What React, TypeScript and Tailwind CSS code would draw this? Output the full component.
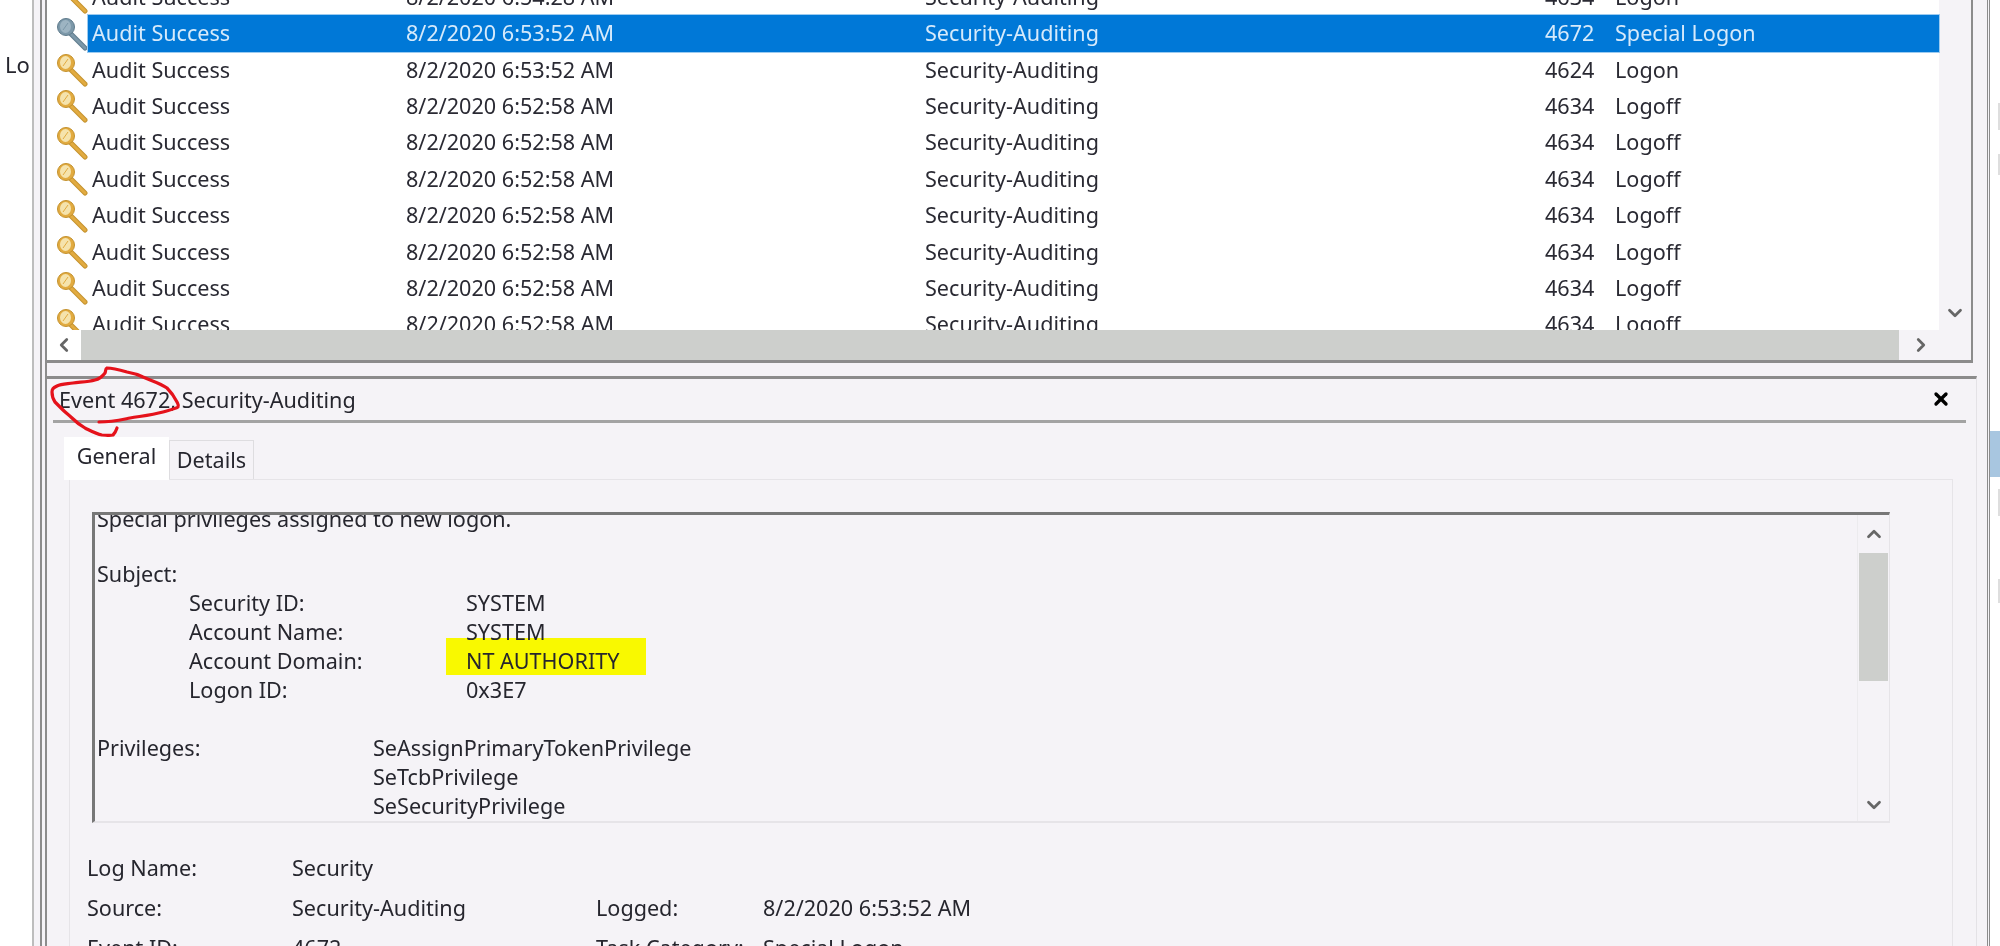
import React from 'react'
import { ChevronDown, ChevronLeft, ChevronRight, ChevronUp, X } from 'lucide-react'

const rows = [
  { time: '6:54:28 AM', id: '4634', task: 'Logon' },
  { time: '6:53:52 AM', id: '4672', task: 'Special Logon', selected: true },
  { time: '6:53:52 AM', id: '4624', task: 'Logon' },
  { time: '6:52:58 AM', id: '4634', task: 'Logoff' },
  { time: '6:52:58 AM', id: '4634', task: 'Logoff' },
  { time: '6:52:58 AM', id: '4634', task: 'Logoff' },
  { time: '6:52:58 AM', id: '4634', task: 'Logoff' },
  { time: '6:52:58 AM', id: '4634', task: 'Logoff' },
  { time: '6:52:58 AM', id: '4634', task: 'Logoff' },
  { time: '6:52:58 AM', id: '4634', task: 'Logoff' },
]

const KeyIcon = ({ selected }: { selected?: boolean }) => {
  const main = selected ? '#7c98a9' : '#e2ab40'
  const dark = selected ? '#5f7b8c' : '#c4922e'
  const inner = selected ? '#9db4c2' : '#f5e3ac'
  return (
    <svg width="31" height="35" viewBox="0 0 31 35" fill="none" className="shrink-0">
      <path d="M13 17 L28 32" stroke={dark} strokeWidth="5" strokeLinecap="round" />
      <path d="M13 17 L28 32" stroke={main} strokeWidth="3" strokeLinecap="round" />
      <circle cx="9" cy="11" r="8.5" fill={main} stroke={dark} strokeWidth="1" />
      <ellipse cx="8.5" cy="10.5" rx="5.5" ry="6.5" fill={inner} />
      <path d="M6 14 L11 7" stroke={main} strokeWidth="1" />
    </svg>
  )
}

const EventRow = ({ row }: { row: any }) => (
  <div className="flex h-[36.4px] shrink-0 items-center pl-[10px]">
    <KeyIcon selected={row.selected} />
    <div
      className={
        row.selected
          ? 'flex h-[37px] flex-1 items-center bg-[#0078d7] pl-[4px] text-[#d6eafb] shadow-[0_0_0_1px_#9ccbf0]'
          : 'flex h-[37px] flex-1 items-center pl-[4px] text-[#2a2a33]'
      }
    >
      <span className="w-[314px] shrink-0">Audit Success</span>
      <span className="w-[519px] shrink-0">8/2/2020 {row.time}</span>
      <span className="w-[620px] shrink-0">Security-Auditing</span>
      <span className="w-[70px] shrink-0">{row.id}</span>
      <span>{row.task}</span>
    </div>
  </div>
)

const Line = ({ label, value, wide }: { label?: string; value?: string; wide?: boolean }) => (
  <div className="flex h-[28.9px] items-center whitespace-nowrap">
    {wide ? (
      <>
        <span className={value ? 'w-[276px] shrink-0' : ''}>{label}</span>
        {value && <span>{value}</span>}
      </>
    ) : (
      <>
        <span className="ml-[92px] w-[277px] shrink-0">{label}</span>
        <span>{value}</span>
      </>
    )}
  </div>
)

const Meta = ({ a, b, c, d }: { a: string; b: string; c?: string; d?: string }) => (
  <div className="flex h-[40px] shrink-0 items-center">
    <span className="w-[205px] shrink-0">{a}</span>
    <span className="w-[304px] shrink-0">{b}</span>
    <span className="w-[167px] shrink-0">{c}</span>
    <span>{d}</span>
  </div>
)

export default function App() {
  return (
    <div className="relative flex h-[946px] w-[2000px] overflow-hidden bg-white font-['Noto_Sans',sans-serif] text-[21.6px] leading-none text-[#26262e] blur-[0.5px]">
      {/* cut off tree pane on the left */}
      <div className="w-[32px] shrink-0 pt-[53px] pl-[5px] text-[22px]">Lo</div>
      <div className="w-[8px] shrink-0 border-l-2 border-[#bdbdbd] bg-[#f5f3f7]" />

      <div className="flex w-[1950px] shrink-0 flex-col border-r-[3px] border-l-[7px] border-double border-[#8c8c8c] border-r-[#8c8c8c] bg-[#f5f3f7]">
        {/* event list */}
        <div className="flex h-[363px] w-[1926px] shrink-0 flex-col border-r-2 border-b-[3px] border-[#8c8c8c]">
          <div className="flex h-[330px] shrink-0 overflow-hidden">
            <div className="mt-[-21.5px] flex w-[1892px] shrink-0 flex-col bg-white">
              {rows.map((row, i) => (
                <EventRow key={i} row={row} />
              ))}
            </div>
            <div className="flex flex-1 items-end justify-center pb-[6px]">
              <ChevronDown size={22} strokeWidth={3} className="text-[#666]" />
            </div>
          </div>
          <div className="flex h-[30px] shrink-0">
            <div className="flex w-[34px] items-center justify-center bg-white">
              <ChevronLeft size={22} strokeWidth={3} className="text-[#666]" />
            </div>
            <div className="flex-1 bg-[#cdcfcc]" />
            <div className="flex w-[72px] items-center pl-[11px]">
              <ChevronRight size={22} strokeWidth={3} className="text-[#666]" />
            </div>
          </div>
        </div>

        {/* details pane */}
        <div className="mt-[13px] flex w-[1930px] flex-1 flex-col border-t-[3px] border-r border-[#8c8c8c] border-r-[#e4e2e6]">
          <div className="ml-[6px] mr-[10px] flex h-[44px] shrink-0 items-center justify-between border-b-[3px] border-[#a3a3a3] pt-[1px] pl-[6px] pr-[15px]">
            <span>Event 4672, Security-Auditing</span>
            <X size={20} strokeWidth={4} className="mb-[3px] text-black" />
          </div>

          <div className="ml-[17px] mt-[14px] flex h-[42px] shrink-0 items-end">
            <div className="z-10 flex h-[43px] w-[105px] translate-y-[1px] items-center justify-center bg-white pb-[5px]">General</div>
            <div className="flex h-[39px] w-[85px] items-center justify-center border border-b-0 border-[#dedde0]">Details</div>
          </div>

          <div className="ml-[22px] flex w-[1884px] flex-1 flex-col overflow-hidden border border-b-0 border-[#e6e4e8]">
            <div className="ml-[22px] mt-[32px] flex h-[311px] w-[1798px] shrink-0 border-t-[3px] border-r border-b-[2px] border-l-[3px] border-[#e6e4e8] border-t-[#777] border-l-[#777]">
              <div className="flex-1 overflow-hidden pl-[2px]">
                <div className="mt-[-11px]">
                  <Line label="Special privileges assigned to new logon." wide />
                  <div className="h-[26.9px]" />
                  <Line label="Subject:" wide />
                  <Line label="Security ID:" value="SYSTEM" />
                  <div className="relative z-10">
                    <Line label="Account Name:" value="SYSTEM" />
                  </div>
                  <div className="relative">
                    <div className="absolute left-[349px] top-[-8px] h-[37px] w-[200px] bg-[#f9f900]" />
                    <div className="relative">
                      <Line label="Account Domain:" value="NT AUTHORITY" />
                    </div>
                  </div>
                  <Line label="Logon ID:" value="0x3E7" />
                  <Line />
                  <Line label="Privileges:" value="SeAssignPrimaryTokenPrivilege" wide />
                  <Line value="SeTcbPrivilege" wide />
                  <Line value="SeSecurityPrivilege" wide />
                </div>
              </div>
              <div className="flex w-[32px] shrink-0 flex-col items-center border-l border-[#ecebee]">
                <div className="flex h-[38px] shrink-0 items-center justify-center">
                  <ChevronUp size={22} strokeWidth={3} className="text-[#666]" />
                </div>
                <div className="h-[128px] w-[29px] shrink-0 bg-[#cdcfcc]" />
                <div className="flex flex-1 items-end pb-[5px]">
                  <ChevronDown size={22} strokeWidth={3} className="text-[#666]" />
                </div>
              </div>
            </div>

            <div className="ml-[-5px] mt-[25px] flex flex-col pl-[22px]">
              <Meta a="Log Name:" b="Security" />
              <Meta a="Source:" b="Security-Auditing" c="Logged:" d="8/2/2020 6:53:52 AM" />
              <Meta a="Event ID:" b="4672" c="Task Category:" d="Special Logon" />
            </div>
          </div>
        </div>
      </div>

      {/* sliver of the next pane on the right */}
      <div className="flex flex-1 flex-col items-end">
        <div className="mt-[103px] h-[27px] w-[2px] bg-[#dedede]" />
        <div className="mt-[24px] h-[21px] w-[2px] bg-[#dedede]" />
        <div className="mt-[256px] h-[46px] w-full bg-[#a8c6e0]" />
        <div className="mt-[12px] h-[27px] w-[2px] bg-[#dedede]" />
        <div className="mt-[63px] h-[24px] w-[2px] bg-[#dedede]" />
      </div>

      {/* red pen mark around the event id */}
      <svg width="2000" height="946" viewBox="0 0 2000 946" fill="none" className="pointer-events-none absolute left-0 top-0">
        <path
          d="M99 422 C112 422 120 420 130 418 C142 416 152 415 163 412 C170 410 175 409 178 407 C179 405 178 404 177 402 C174 396 172 393 167 388 C160 383 152 381 143 377 C137 374 133 373 127 372 C120 370 113 368 107 368 C105 369 106 371 105 373 C102 377 100 379 95 380 C88 382 80 382 73 383 C66 384 61 384 57 386 C53 388 52 389 52 392 C52 396 53 399 55 402 C58 405 60 407 63 410 C66 413 69 415 72 418 C76 422 80 425 85 428 C91 431 96 434 102 435 C106 435 109 436 113 435 C115 433 116 431 117 428"
          stroke="#e5121b"
          strokeWidth="3.2"
          strokeLinecap="round"
          strokeLinejoin="round"
        />
      </svg>
    </div>
  )
}
